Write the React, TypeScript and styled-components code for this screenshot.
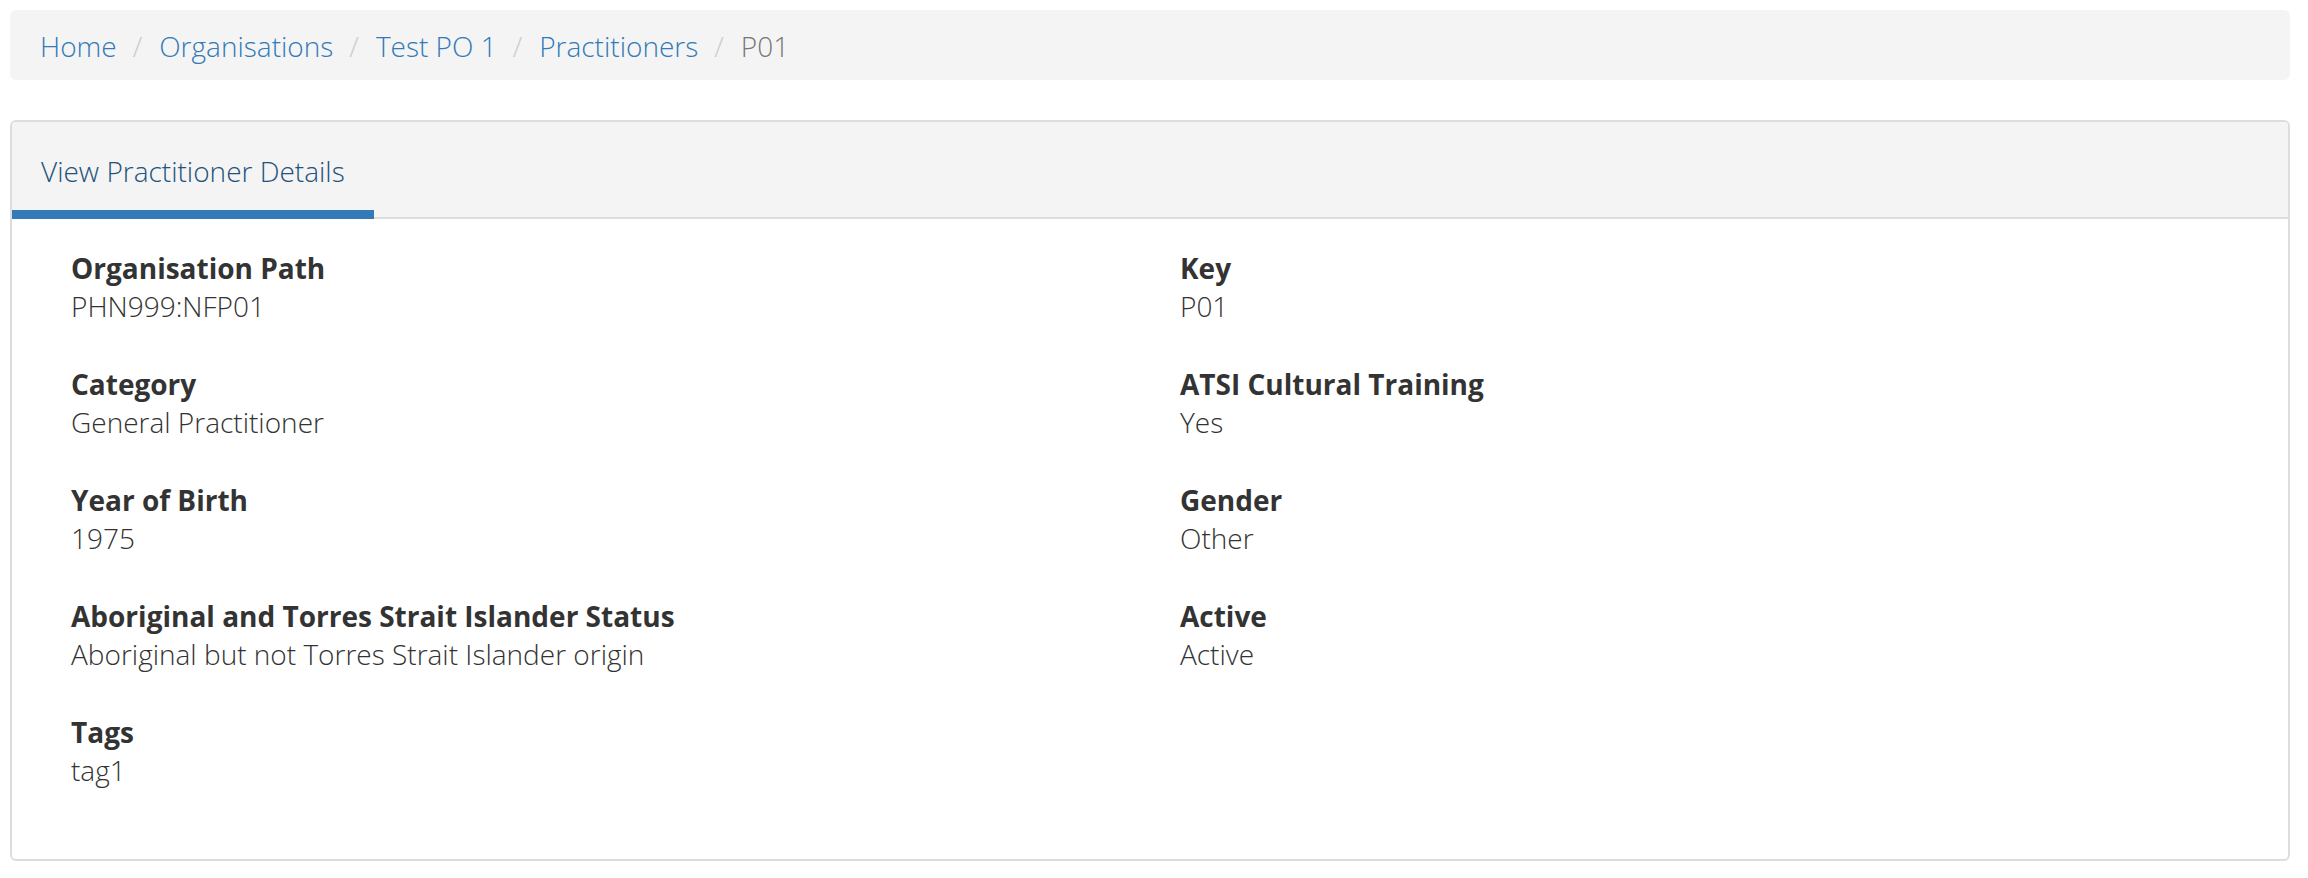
import * as React from "react";
import styled, { createGlobalStyle } from "styled-components";

const GlobalStyle = createGlobalStyle`
  html, body {
    margin: 0;
    padding: 0;
    background: #fff;
  }
  body {
    padding: 10px 18px 0 10px;
    font-family: "Open Sans", "Liberation Sans", sans-serif;
    font-size: 28px;
    font-weight: 300;
    line-height: 38.57px;
    color: #333;
  }
`;

type Crumb = { label: string; href?: string };

const crumbs: Crumb[] = [
  { label: "Home", href: "#" },
  { label: "Organisations", href: "#" },
  { label: "Test PO 1", href: "#" },
  { label: "Practitioners", href: "#" },
  { label: "P01" },
];

type Field = { label: string; value: string };

const leftFields: Field[] = [
  { label: "Organisation Path", value: "PHN999:NFP01" },
  { label: "Category", value: "General Practitioner" },
  { label: "Year of Birth", value: "1975" },
  {
    label: "Aboriginal and Torres Strait Islander Status",
    value: "Aboriginal but not Torres Strait Islander origin",
  },
  { label: "Tags", value: "tag1" },
];

const rightFields: Field[] = [
  { label: "Key", value: "P01" },
  { label: "ATSI Cultural Training", value: "Yes" },
  { label: "Gender", value: "Other" },
  { label: "Active", value: "Active" },
];

export default function App() {
  return (
    <>
      <GlobalStyle />
      <Breadcrumb>
        {crumbs.map((crumb, i) => (
          <React.Fragment key={crumb.label}>
            {i > 0 && <Separator>/</Separator>}
            {crumb.href ? (
              <CrumbLink href={crumb.href}>{crumb.label}</CrumbLink>
            ) : (
              <CrumbCurrent>{crumb.label}</CrumbCurrent>
            )}
          </React.Fragment>
        ))}
      </Breadcrumb>

      <Panel>
        <TabBar>
          <Tab $active>View Practitioner Details</Tab>
        </TabBar>

        <PanelBody>
          {[leftFields, rightFields].map((col, c) => (
            <Column key={c}>
              {col.map((field) => (
                <FieldBlock key={field.label}>
                  <FieldLabel>{field.label}</FieldLabel>
                  <FieldValue>{field.value}</FieldValue>
                </FieldBlock>
              ))}
            </Column>
          ))}
        </PanelBody>
      </Panel>
    </>
  );
}

const Breadcrumb = styled.nav`
  display: flex;
  align-items: flex-start;
  box-sizing: border-box;
  height: 70px;
  padding: 17px 30px 0;
  margin-bottom: 40px;
  background: #f4f4f4;
  border-radius: 6px;
`;

const CrumbLink = styled.a`
  color: #337ab7;
  text-decoration: none;
`;

const CrumbCurrent = styled.span`
  color: #777;
`;

const Separator = styled.span`
  color: #ccc;
  padding: 0 17px 0 16px;
`;

const Panel = styled.section`
  border: 2px solid #ddd;
  border-radius: 6px;
  background: #fff;
  overflow: hidden;
`;

const TabBar = styled.div`
  display: flex;
  background: #f4f4f4;
  border-bottom: 2px solid #ddd;
`;

const Tab = styled.div<{ $active?: boolean }>`
  padding: 30px 29px 19px;
  margin-bottom: -2px;
  color: #23527c;
  border-bottom: 9px solid ${(p) => (p.$active ? "#337ab7" : "transparent")};
`;

const PanelBody = styled.div`
  display: grid;
  grid-template-columns: 1fr 1fr;
  padding: 30px 29px 31px;
`;

const Column = styled.div`
  padding: 0 30px;
`;

const FieldBlock = styled.div`
  margin-bottom: 38.86px;
`;

const FieldLabel = styled.div`
  font-weight: 700;
  color: #333;
`;

const FieldValue = styled.div`
  font-weight: 300;
  color: #333;
`;
